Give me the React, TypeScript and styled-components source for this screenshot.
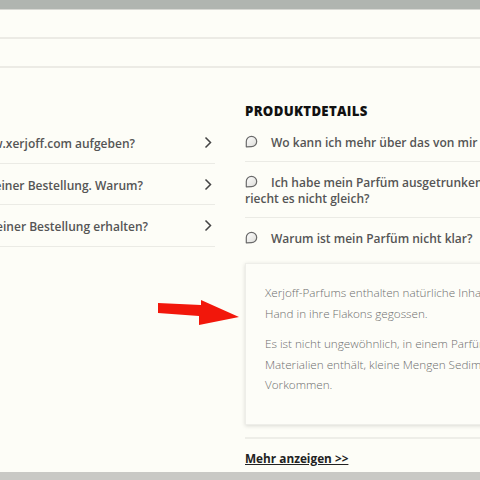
import styled, { createGlobalStyle } from "styled-components";

const GlobalStyle = createGlobalStyle`
    html, body {
        margin: 0;
        padding: 0;
        background: #fdfdf7;
        overflow: hidden;
    }
    body {
        font-family: "Open Sans", "Liberation Sans", sans-serif;
        width: 480px;
        height: 480px;
    }
`;

const leftQuestions = [
    { text: "Wie kann ich eine Bestellung auf www.xerjoff.com aufgeben?", gap: 69 },
    { text: "Es fehlt ein Artikel in meiner Bestellung. Warum?", gap: 61 },
    { text: "Ich habe einen falschen Artikel in meiner Bestellung erhalten?", gap: 56 },
];

function Chevron() {
    return (
        <svg width="8" height="13" viewBox="0 0 8 13">
            <polyline points="1.5,1.5 6.5,6.5 1.5,11.5" fill="none" stroke="#444" strokeWidth="1.5" />
        </svg>
    );
}

function Bubble() {
    return (
        <BubbleIcon width="13" height="13" viewBox="0 0 13 13">
            <defs>
                <linearGradient id="bub" x1="0" y1="0" x2="1" y2="1">
                    <stop offset="0" stopColor="#ffffff" />
                    <stop offset="1" stopColor="#dcdcd7" />
                </linearGradient>
            </defs>
            <path
                d="M1.3 11.8 L1.3 6.5 A5.2 5.2 0 1 1 6.5 11.7 Z"
                fill="url(#bub)"
                stroke="#6a6a6a"
                strokeWidth="1.2"
                strokeLinejoin="round"
            />
        </BubbleIcon>
    );
}

function Arrow() {
    return (
        <ArrowMark width="84" height="30" viewBox="0 0 84 30">
            <polygon points="0,3 43,5 43,0 81,17 41,25 41,16 0,13" fill="#f2170b" />
        </ArrowMark>
    );
}

export default function App() {
    return (
        <>
            <GlobalStyle />
            <Page>
                <TopBar />
                <Strip />
                <Strip />
                <Main>
                    <LeftCol>
                        {leftQuestions.map((q) => (
                            <LeftRow key={q.text}>
                                <TextClip $gap={q.gap}>
                                    <LeftLabel>{q.text}</LeftLabel>
                                </TextClip>
                                <ChevronSlot>
                                    <Chevron />
                                </ChevronSlot>
                            </LeftRow>
                        ))}
                    </LeftCol>
                    <RightCol>
                        <Title>PRODUKTDETAILS</Title>
                        <Question>
                            <Bubble />
                            Wo kann ich mehr über das von mir gekaufte Parfüm erfahren?
                        </Question>
                        <Question>
                            <Bubble />
                            Ich habe mein Parfüm ausgetrunken und ein neues gekauft, warum
                            <br />
                            riecht es nicht gleich?
                        </Question>
                        <Question $last>
                            <Bubble />
                            Warum ist mein Parfüm nicht klar?
                        </Question>
                        <AnswerBox>
                            <Arrow />
                            <Paragraph>
                                Xerjoff-Parfums enthalten natürliche Inhaltsstoffe und werden von
                                <br />
                                Hand in ihre Flakons gegossen.
                            </Paragraph>
                            <Paragraph>
                                Es ist nicht ungewöhnlich, in einem Parfüm, das natürliche
                                <br />
                                Materialien enthält, kleine Mengen Sediment oder Partikel
                                <br />
                                Vorkommen.
                            </Paragraph>
                        </AnswerBox>
                        <Divider />
                        <MoreLink href="#">Mehr anzeigen &gt;&gt;</MoreLink>
                    </RightCol>
                </Main>
                <BottomBar />
            </Page>
        </>
    );
}

const Page = styled.div`
    width: 480px;
    height: 480px;
    overflow: hidden;
    display: flex;
    flex-direction: column;
`;

const TopBar = styled.div`
    height: 9px;
    flex: none;
    background: #b0b5b0;
    border-bottom: 1px solid #d8d9d4;
`;

const Strip = styled.div`
    height: 27px;
    flex: none;
    border-bottom: 2px solid #ecebe5;
`;

const Main = styled.div`
    display: flex;
    gap: 30px;
    padding-top: 35px;
    flex: 1;
`;

const LeftCol = styled.div`
    width: 215px;
    flex: none;
    padding-top: 19px;
`;

const LeftRow = styled.div`
    height: 41.5px;
    box-sizing: border-box;
    border-bottom: 1px solid #ebebe5;
    display: flex;
    align-items: flex-start;
    padding-top: 14px;
`;

const TextClip = styled.div<{ $gap: number }>`
    flex: 1;
    min-width: 0;
    overflow: hidden;
    direction: rtl;
    white-space: nowrap;
    font-size: 12px;
    line-height: 16px;
    padding-right: ${(p) => p.$gap}px;
`;

const LeftLabel = styled.span`
    display: inline-block;
    vertical-align: top;
    direction: ltr;
    font-size: 12px;
    font-weight: 600;
    line-height: 16px;
    color: #555;
`;

const ChevronSlot = styled.span`
    width: 8px;
    flex: none;
    margin-right: 3px;
    margin-top: -4px;
`;

const RightCol = styled.div`
    width: 430px;
    flex: none;
    display: flex;
    flex-direction: column;
`;

const Title = styled.h2`
    margin: 0 0 3px;
    font-size: 13.2px;
    font-weight: 800;
    line-height: 16px;
    color: #111;
    letter-spacing: 0.3px;
`;

const Question = styled.div<{ $last?: boolean }>`
    padding: 13px 0 ${(p) => (p.$last ? "0" : "10px")};
    border-bottom: ${(p) => (p.$last ? "none" : "1px solid #ebebe5")};
    font-size: 12px;
    font-weight: 600;
    line-height: 16px;
    color: #555;
    white-space: nowrap;
`;

const BubbleIcon = styled.svg`
    display: inline-block;
    vertical-align: -1px;
    margin-right: 13px;
`;

const AnswerBox = styled.div`
    position: relative;
    margin-top: 16px;
    height: 162px;
    box-sizing: border-box;
    padding: 18px 19px 0;
    background: #fdfdf8;
    border: 1px solid #eeeee9;
    box-shadow: 0 1px 4px rgba(0, 0, 0, 0.14);
`;

const ArrowMark = styled.svg`
    position: absolute;
    left: -88px;
    top: 36px;
`;

const Paragraph = styled.p`
    margin: 0 0 10px;
    font-size: 11.7px;
    font-weight: 300;
    line-height: 20.5px;
    color: #6e6e6e;
    white-space: nowrap;
`;

const Divider = styled.div`
    margin-top: 12px;
    height: 2px;
    background: #eeeee8;
`;

const MoreLink = styled.a`
    margin-top: 11px;
    align-self: flex-start;
    font-size: 11.8px;
    font-weight: 700;
    line-height: 16px;
    color: #222;
    text-decoration: underline;
`;

const BottomBar = styled.div`
    height: 8px;
    flex: none;
    background: #c9c9c5;
`;
